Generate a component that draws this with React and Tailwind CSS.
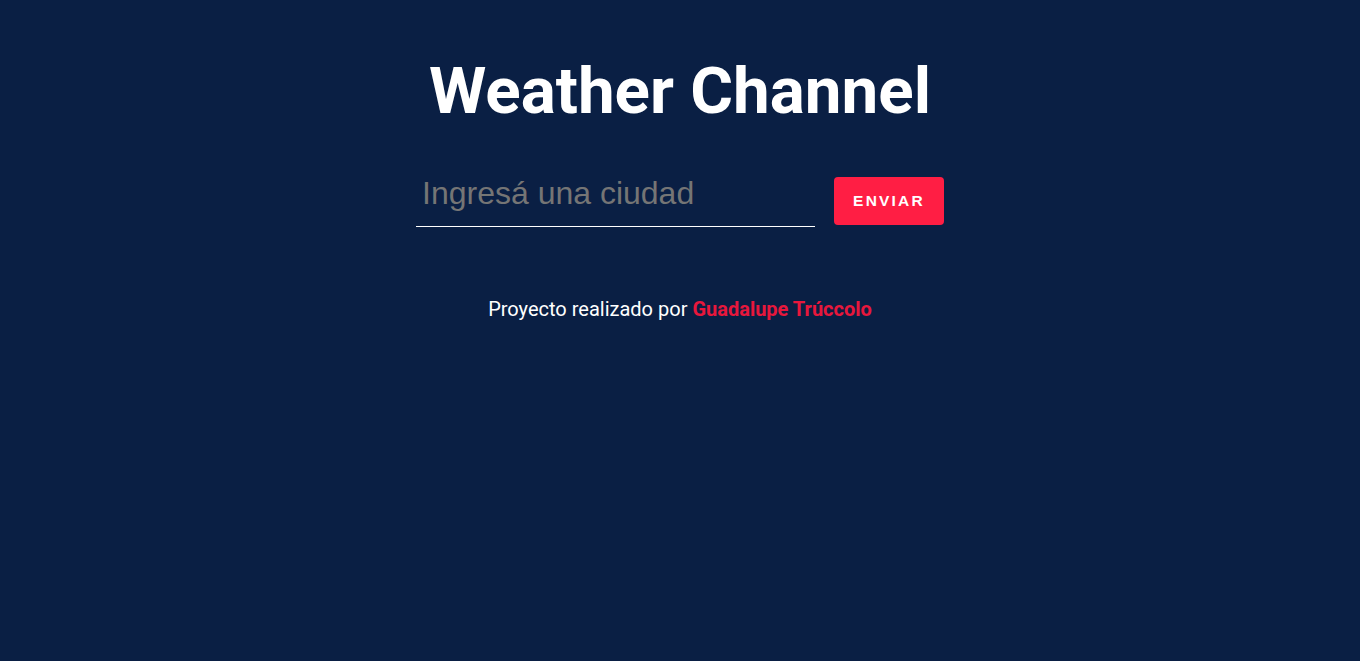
export default function App() {
  return (
    <div className="min-h-[661px] w-full bg-[#0a1f44] flex flex-col items-center">
      <h1 className="mt-[53px] text-[65.5px] leading-[76px] font-bold text-white font-['Roboto',sans-serif]">
        Weather Channel
      </h1>
      <form className="mt-[46px] flex items-center gap-[19px]" onSubmit={e => e.preventDefault()}>
        <input
          type="text"
          placeholder="Ingresá una ciudad"
          className="w-[399px] h-[52px] bg-transparent border-b border-white px-[6px] pb-[14px] text-[32px] text-white placeholder:text-[#757575] font-['Liberation_Sans',Arial,sans-serif] focus:outline-none"
        />
        <button
          type="submit"
          className="w-[110px] h-[48px] rounded-[4px] bg-[#ff1e44] text-white text-[15.5px] font-bold tracking-[2.2px] font-['Liberation_Sans',Arial,sans-serif]"
        >
          ENVIAR
        </button>
      </form>
      <p className="mt-[67px] text-[20px] text-white font-['Roboto',sans-serif]">
        Proyecto realizado por{' '}
        <span className="font-bold text-[#e8173c]">Guadalupe Trúccolo</span>
      </p>
    </div>
  );
}
